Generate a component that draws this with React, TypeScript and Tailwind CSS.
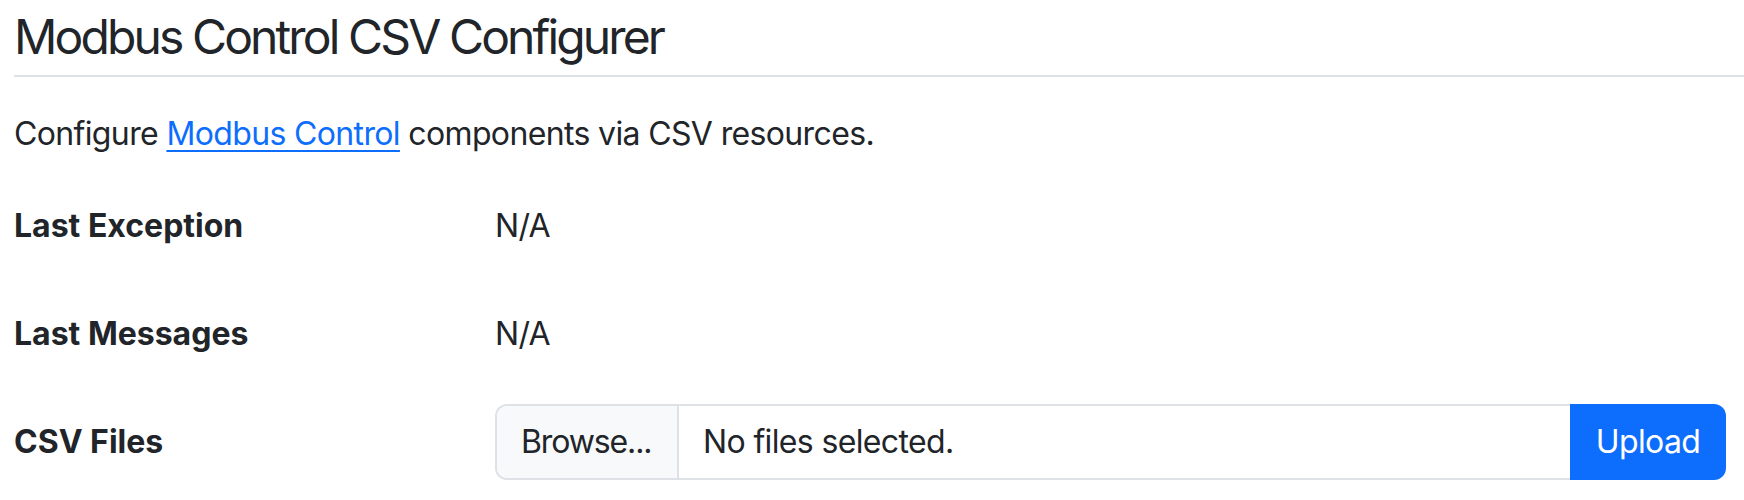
import React from 'react';

const rows = [
  { label: 'Last Exception', value: 'N/A' },
  { label: 'Last Messages', value: 'N/A' },
];

export default function App() {
  return (
    <div className="min-h-[500px] bg-white pt-[8px] text-[#212529] font-['Inter','Liberation_Sans',sans-serif]">
      {/* Title */}
      <h1 className="ml-[14px] mb-[33px] border-b-2 border-[#dee2e6] pb-[9px] text-[48px] leading-[58px] font-normal tracking-[-0.06em]">
        Modbus Control CSV Configurer
      </h1>

      <div className="pl-[14px] pr-[18px] text-[32px] leading-[48px] tracking-[-0.02em]">
        <p className="mb-[30px]">
          Configure{' '}
          <a href="#" className="text-[#0d6efd] underline decoration-2 underline-offset-[5px]">
            Modbus Control
          </a>{' '}
          components via CSV resources.
        </p>

        <div className="grid grid-cols-[481px_1fr] gap-y-[32px]">
          {rows.map((row) => (
            <React.Fragment key={row.label}>
              <div className="h-[76px] py-[14px] font-bold tracking-normal">{row.label}</div>
              <div className="h-[76px] py-[14px]">{row.value}</div>
            </React.Fragment>
          ))}

          <div className="h-[76px] py-[14px] font-bold tracking-normal">CSV Files</div>
          <div className="flex h-[76px]">
            <div className="flex flex-1 overflow-hidden rounded-l-[12px] border-2 border-r-0 border-[#dee2e6]">
              <span className="flex w-[182px] items-center border-r-2 border-[#dee2e6] bg-[#f8f9fa] px-[24px] tracking-[-0.035em]">
                Browse...
              </span>
              <span className="flex flex-1 items-center px-[24px]">No files selected.</span>
            </div>
            <button className="w-[156px] rounded-r-[12px] bg-[#0d6efd] text-white">Upload</button>
          </div>
        </div>
      </div>
    </div>
  );
}
